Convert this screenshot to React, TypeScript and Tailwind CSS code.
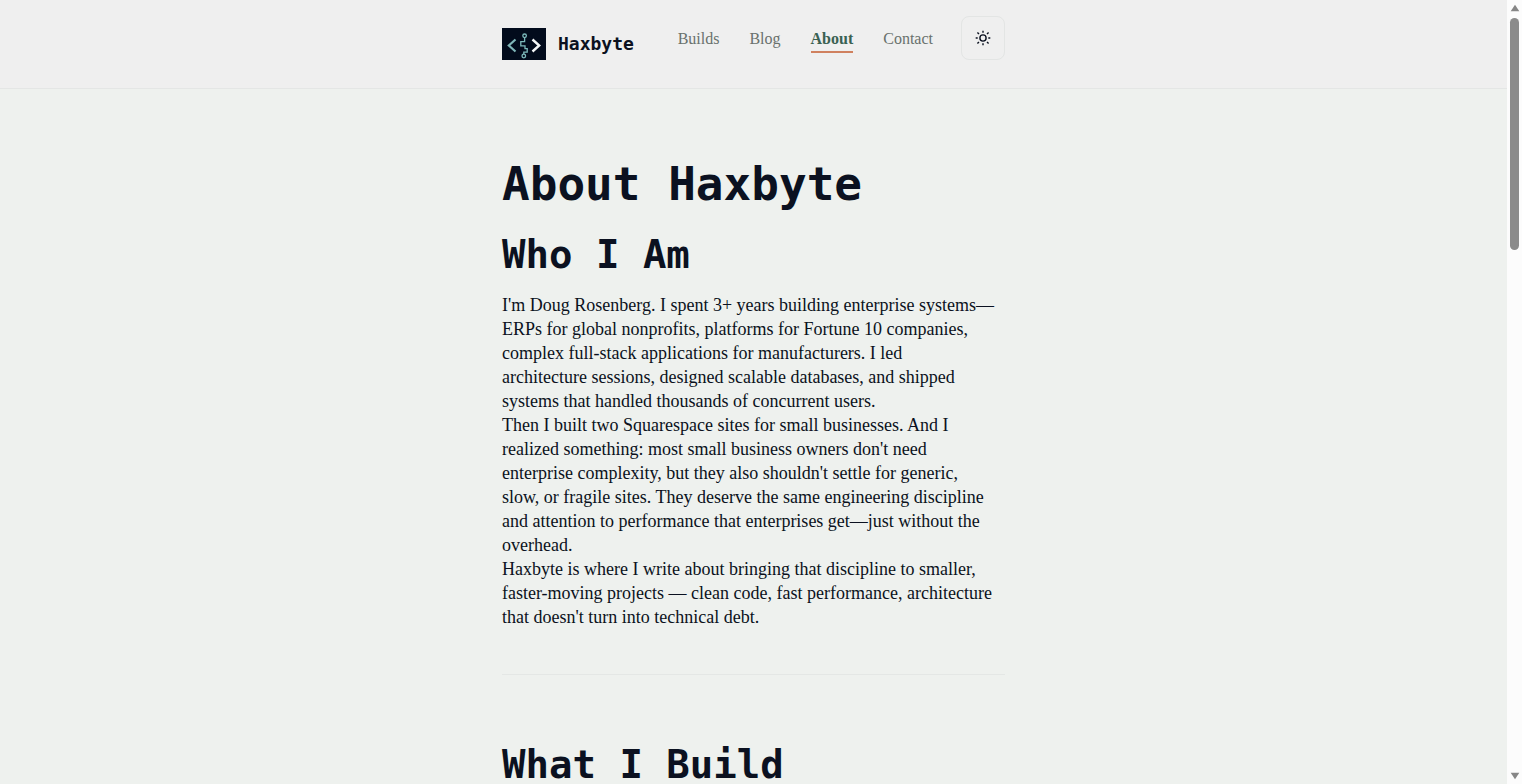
const NAV_LINKS = [
  { label: "Builds", href: "/builds" },
  { label: "Blog", href: "/blog" },
  { label: "About", href: "/about" },
  { label: "Contact", href: "/contact" },
];

const CURRENT = "/about";

// Each paragraph is set line by line so the measure stays the same in any serif
const WHO_I_AM = [
  [
    "I'm Doug Rosenberg. I spent 3+ years building enterprise systems—",
    "ERPs for global nonprofits, platforms for Fortune 10 companies,",
    "complex full-stack applications for manufacturers. I led",
    "architecture sessions, designed scalable databases, and shipped",
    "systems that handled thousands of concurrent users.",
  ],
  [
    "Then I built two Squarespace sites for small businesses. And I",
    "realized something: most small business owners don't need",
    "enterprise complexity, but they also shouldn't settle for generic,",
    "slow, or fragile sites. They deserve the same engineering discipline",
    "and attention to performance that enterprises get—just without the",
    "overhead.",
  ],
  [
    "Haxbyte is where I write about bringing that discipline to smaller,",
    "faster-moving projects — clean code, fast performance, architecture",
    "that doesn't turn into technical debt.",
  ],
];

function Logo() {
  return (
    <svg viewBox="0 0 44 32" fill="none" className="w-11 h-8 shrink-0" aria-hidden="true">
      <rect width="44" height="32" fill="#020b1c" />
      <path d="M13.5 11.5L6.8 17.5L13.5 23.5" stroke="#7fb5b8" strokeWidth="2.2" />
      <path d="M30.5 11.5L37.2 17.5L30.5 23.5" stroke="#f4f7f8" strokeWidth="2.4" />
      <g stroke="#7cb9bb" strokeWidth="1.3">
        <circle cx="22.6" cy="7.8" r="1.8" />
        <path d="M22.6 9.6V13.6H18.8V17.8H23V20.6H25.2V24.2H21.8V26" />
        <circle cx="21.8" cy="28" r="1.8" />
      </g>
    </svg>
  );
}

function IconSun() {
  return (
    <svg viewBox="0 0 16 16" fill="none" stroke="currentColor" strokeWidth="1.4" className="w-4 h-4">
      <circle cx="8" cy="8" r="3.1" />
      <path d="M8 .7v2M8 13.3v2M.7 8h2M13.3 8h2M2.4 2.4l1.6 1.6M12 12l1.6 1.6M2.4 13.6L4 12M12 4l1.6-1.6" />
    </svg>
  );
}

function Header() {
  return (
    <header className="bg-[#efefef] border-b border-[#e4e6e5]">
      <div className="w-full max-w-[503px] mx-auto pt-4 pb-7 flex items-center justify-between">
        <a href="/" className="self-end flex items-center gap-3">
          <Logo />
          <span className="font-['DejaVu_Sans_Mono',monospace] font-bold text-lg leading-8">Haxbyte</span>
        </a>
        <div className="flex items-center gap-7">
          <nav className="flex items-center gap-[30px]">
            {NAV_LINKS.map((link) => (
              <a
                key={link.href}
                href={link.href}
                aria-current={link.href === CURRENT ? "page" : undefined}
                className={`pt-1.5 pb-0.5 border-b-2 text-base leading-5 ${
                  link.href === CURRENT
                    ? "font-bold text-[#3a6152] border-[#d0815f]"
                    : "text-[#69716d] border-transparent"
                }`}
              >
                {link.label}
              </a>
            ))}
          </nav>
          <button
            type="button"
            aria-label="Toggle theme"
            className="w-11 h-11 flex items-center justify-center border border-[#e3e5e4] rounded-lg"
          >
            <IconSun />
          </button>
        </div>
      </div>
    </header>
  );
}

function SectionTitle({ children }: { children: string }) {
  return (
    <h2 className="font-['DejaVu_Sans_Mono',monospace] font-bold text-[39px] leading-9">{children}</h2>
  );
}

function Scrollbar() {
  return (
    <div className="w-[15px] shrink-0 bg-[#fcfcfc] flex flex-col items-center py-1 gap-1.5" aria-hidden="true">
      <svg viewBox="0 0 10 8" className="w-2.5 h-2 shrink-0">
        <path d="M5 .8L9.3 7.2H.7z" fill="#868686" />
      </svg>
      <div className="flex-1 w-[9px]">
        <div className="h-[31%] rounded-full bg-[#8b8b8b]" />
      </div>
      <svg viewBox="0 0 10 8" className="w-2.5 h-2 shrink-0">
        <path d="M5 7.2L.7 .8H9.3z" fill="#868686" />
      </svg>
    </div>
  );
}

export default function App() {
  return (
    <div className="h-screen flex overflow-hidden bg-[#eef1ee] text-[#0b1120] font-['Liberation_Serif',serif]">
      <div className="flex-1 min-w-0 overflow-hidden">
        <Header />
        <main className="w-full max-w-[503px] mx-auto pt-16">
          <h1 className="font-['DejaVu_Sans_Mono',monospace] font-bold text-[46px] leading-[62px]">About Haxbyte</h1>
          <section className="pt-[22px] pb-[45px] border-b border-[#e4e7e5]">
            <SectionTitle>Who I Am</SectionTitle>
            <div className="pt-5">
              {WHO_I_AM.map((lines, i) => (
                <p key={i} className="text-lg leading-6 whitespace-nowrap">
                  {lines.map((line) => (
                    <span key={line} className="block">
                      {line}
                    </span>
                  ))}
                </p>
              ))}
            </div>
          </section>
          <section className="pt-18">
            <SectionTitle>What I Build</SectionTitle>
          </section>
        </main>
      </div>
      <Scrollbar />
    </div>
  );
}
